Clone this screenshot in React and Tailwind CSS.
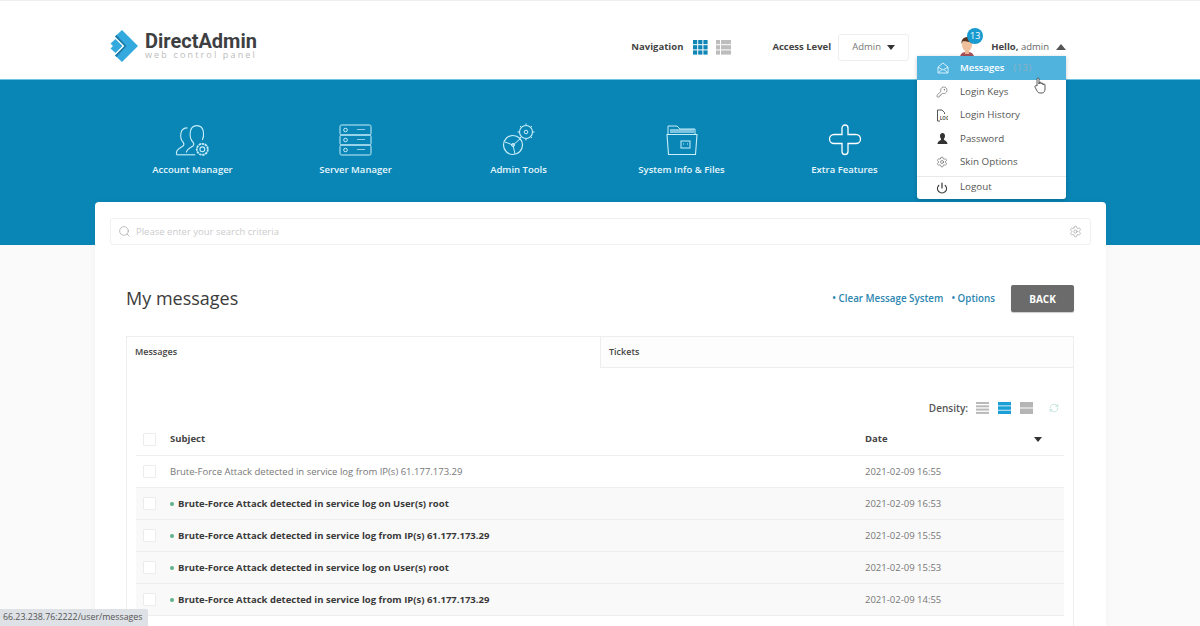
import React from "react";
import { KeyRound, Search, Settings, Power, RefreshCw } from "lucide-react";

const font = { fontFamily: '"Open Sans", sans-serif' };

const Logo = () => (
  <div className="flex items-center gap-[6px] pt-[12px]">
    <svg width="29" height="33" viewBox="0 0 29 33">
      <path d="M12 0 L28 16 L12 32 L5 25.500 L14.500 16 L5 6.500 Z" fill="#34a9de" />
      <path d="M0.500 13.500 L5.500 9 L12.500 16 L5.500 23 L0.500 18.500 L3 16 Z" fill="#34a9de" />
      <path d="M5 6.500 L14.500 16 L5 25.500 L6.500 27 L16.500 16 L6.500 5 Z" fill="#1f7ba6" />
    </svg>
    <div className="flex flex-col">
      <span className="text-[20px] leading-[18px] font-bold text-[#3d3f42] whitespace-nowrap" style={{ fontFamily: "Roboto, sans-serif" }}>
        DirectAdmin
      </span>
      <span className="text-[9px] leading-[10px] text-[#bcbcbc] tracking-[2.150px] whitespace-nowrap">web control panel</span>
    </div>
  </div>
);

const NavGrid = () => (
  <svg width="15" height="15" viewBox="0 0 15 15" fill="#0f86b5">
    {[0, 5.2, 10.4].map((y) =>
      [0, 5.2, 10.4].map((x) => <rect key={`${x}-${y}`} x={x} y={y} width="4.2" height="4.2" />)
    )}
  </svg>
);

const NavList = () => (
  <svg width="15" height="15" viewBox="0 0 15 15" fill="#bdbdbd">
    {[0, 5.2, 10.4].map((y) => (
      <g key={y}>
        <rect x="0" y={y} width="4" height="4.2" />
        <rect x="5" y={y} width="10" height="4.2" />
      </g>
    ))}
  </svg>
);

const Avatar = () => (
  <svg width="18" height="22" viewBox="0 0 18 22">
    <path d="M2 22 C2 17 5 16 9 16 C13 16 16 17 16 22 Z" fill="#a7505a" />
    <rect x="7" y="14" width="4" height="4" fill="#e9b48f" />
    <ellipse cx="9" cy="9" rx="5" ry="6.5" fill="#f0c09c" />
    <path d="M3.5 8 C3 2 7 1 10 1 C14 1 15 4 14.5 8 C13 5 7 6 5 5 Z" fill="#5b3423" />
  </svg>
);

const AccountIcon = () => (
  <svg width="44" height="33" viewBox="0 0 32 30" fill="none" stroke="#c8eefa" strokeWidth="1">
    <path d="M1 28 v-2 c0-3 3-4 6-6 c1-1 1-2 0-3.500 c-2-2-2.500-5-2-8 c.5-3 3-5 6-5" />
    <path d="M1 28 h17" />
    <path d="M10 26 c0-3 3-4 6-6 c1-1 1-2 0-3.500 c-2-2-3-5-2.500-9 c.5-4 3-6 6-6 s5.500 2 6 6 c.3 2.500 0 5-1 7" />
    <circle cx="24.500" cy="23" r="2.200" />
    <circle cx="24.500" cy="23" r="5" strokeDasharray="2.200 0.600" strokeWidth="1.600" />
  </svg>
);

const ServerIcon = () => (
  <svg width="34" height="32" viewBox="0 0 34 32" fill="none" stroke="#c8eefa" strokeWidth="1">
    {[1, 11, 21].map((y) => (
      <g key={y}>
        <rect x="1" y={y} width="31" height="10" rx="1.500" />
        <circle cx="6.500" cy={y + 5} r="1.800" />
        <path d={`M18 ${y + 5} l1 -1 l1 1 l1 -1 l1 1 l1 -1 l1 1 l1 -1 l1 1`} strokeWidth="0.700" />
      </g>
    ))}
  </svg>
);

const ToolsIcon = () => (
  <svg width="34" height="34" viewBox="0 0 34 34" fill="none" stroke="#c8eefa" strokeWidth="1">
    <circle cx="24" cy="9" r="6.500" strokeWidth="1.100" />
    <circle cx="24" cy="9" r="1.800" />
    <path d="M24 0.500v2M24 15.500v2M15.500 9h2M30.500 9h2M18 3l1.400 1.400M30 15l-1.400-1.400M18 15l1.400-1.400M30 3l-1.400 1.400" />
    <circle cx="11" cy="22" r="9.500" strokeWidth="1.200" />
    <path d="M11 22 l-8 -3 M11 22 l7 -6 M11 22 l2 9" />
    <circle cx="11" cy="22" r="1.500" />
  </svg>
);

const FolderIcon = () => (
  <svg width="32" height="32" viewBox="0 0 32 32" fill="none" stroke="#c8eefa" strokeWidth="1">
    <path d="M2 10 V2 h9 l3 3 h15 v5" />
    <path d="M4 6 h24 M4 8 h24" strokeWidth="1.500" opacity="0.800" />
    <path d="M1 10.500 h30 l-1.500 20 h-27 Z" strokeWidth="1.100" />
    <rect x="15" y="17" width="9" height="7" />
    <path d="M17 20 h1 M21 20 h1" />
  </svg>
);

const PlusIcon = () => (
  <svg width="34" height="32" viewBox="0 0 34 32" fill="none" stroke="#ffffff" strokeWidth="1.300">
    <path d="M14 4 a3 3 0 0 1 6 0 V10.500 H28 a4.500 4.500 0 0 1 0 9 H20 V27.500 a3 3 0 0 1 -6 0 V19.500 H6 a4.500 4.500 0 0 1 0 -9 H14 Z" />
  </svg>
);

const MailOpenIcon = ({ color }) => (
  <svg width="12" height="12" viewBox="0 0 12 12" fill="none" stroke={color} strokeWidth="1">
    <path d="M1 5 L6 1 L11 5 V11 H1 Z" />
    <path d="M1 5 L6 8 L11 5 M1 11 L5 7.500 M11 11 L7 7.500" />
  </svg>
);

const LogIcon = () => (
  <svg width="12" height="13" viewBox="0 0 12 13" fill="none" stroke="#555" strokeWidth="1">
    <path d="M4 12 H1.500 V1 H6 L8.500 3.500 V5" />
    <text x="3.800" y="10.500" fontSize="4.500" fontWeight="700" fill="#555" stroke="none">LOG</text>
  </svg>
);

const PersonIcon = () => (
  <svg width="11" height="11" viewBox="0 0 11 11" fill="#333">
    <path d="M5.500 0 C7.300 0 8 1.400 8 3 C8 4.600 7 5.600 6.800 6.400 C7.200 7.400 10.500 7.800 10.500 11 H0.500 C0.500 7.800 3.800 7.400 4.200 6.400 C4 5.600 3 4.600 3 3 C3 1.400 3.700 0 5.500 0 Z" />
  </svg>
);

const DensityIcon = ({ rows, color }) => (
  <svg width="13" height="12" viewBox="0 0 13 12" fill={color}>
    {rows.map(([y, h]) => (
      <rect key={y} x="0" y={y} width="13" height={h} />
    ))}
  </svg>
);

const Checkbox = () => <span className="block w-[13px] h-[13px] border border-[#ececec] bg-white rounded-[1px]" />;

const navItems = [
  { label: "Account Manager", icon: <AccountIcon /> },
  { label: "Server Manager", icon: <ServerIcon /> },
  { label: "Admin Tools", icon: <ToolsIcon /> },
  { label: "System Info & Files", icon: <FolderIcon /> },
  { label: "Extra Features", icon: <PlusIcon /> },
];

const menuItems = [
  { label: "Login Keys", icon: <KeyRound size={12} strokeWidth={1.2} color="#555" /> },
  { label: "Login History", icon: <LogIcon /> },
  { label: "Password", icon: <PersonIcon /> },
  { label: "Skin Options", icon: <Settings size={12} strokeWidth={1.2} color="#555" /> },
];

const messages = [
  { subject: "Brute-Force Attack detected in service log from IP(s) 61.177.173.29", date: "2021-02-09 16:55", unread: false },
  { subject: "Brute-Force Attack detected in service log on User(s) root", date: "2021-02-09 16:53", unread: true },
  { subject: "Brute-Force Attack detected in service log from IP(s) 61.177.173.29", date: "2021-02-09 15:55", unread: true },
  { subject: "Brute-Force Attack detected in service log on User(s) root", date: "2021-02-09 15:53", unread: true },
  { subject: "Brute-Force Attack detected in service log from IP(s) 61.177.173.29", date: "2021-02-09 14:55", unread: true },
];

const MessageRow = ({ msg }) => (
  <div className={`flex items-center h-[32px] border-b border-[#eeeeee] ${msg.unread ? "bg-[#f9f9f9]" : "bg-white"}`}>
    <div className="w-[34px] pl-[7px]">
      <Checkbox />
    </div>
    <div className="flex-1 flex items-center text-[9.500px] pt-[1px]">
      {msg.unread ? (
        <>
          <span className="w-[4px] h-[4px] rounded-full bg-[#5cb08a] mr-[4px]" />
          <span className="font-bold text-[#3a3a3a]">{msg.subject}</span>
        </>
      ) : (
        <span className="text-[#777]">{msg.subject}</span>
      )}
    </div>
    <div className="w-[199px] text-[9.500px] text-[#777] pt-[1px]">{msg.date}</div>
  </div>
);

export default function App() {
  return (
    <div className="relative w-[1200px] h-[626px] overflow-hidden bg-[#fafafa]" style={font}>
      <header className="h-[80px] bg-white border-t border-[#eeeeee] border-b border-b-[#6cc4e2] flex items-center pl-[110px] pr-[134px]">
        <Logo />
        <div className="flex-1" />
        <div className="flex items-center pt-[14px]">
          <span className="text-[9.500px] font-bold text-[#444]">Navigation</span>
          <div className="flex items-center gap-[8px] ml-[10px]">
            <NavGrid />
            <NavList />
          </div>
          <span className="text-[9.500px] font-bold text-[#444] ml-[41px]">Access Level</span>
          <div className="flex items-center justify-between ml-[7px] w-[71px] h-[27px] px-[13px] border border-[#eeeeee] rounded-[3px] bg-white">
            <span className="text-[9.500px] text-[#777]">Admin</span>
            <span className="w-0 h-0 border-l-[4.500px] border-r-[4.500px] border-t-[5px] border-l-transparent border-r-transparent border-t-[#333]" />
          </div>
          <div className="relative ml-[49px] w-[18px] h-[22px]">
            <Avatar />
            <span className="absolute -top-[8px] left-[9px] w-[16px] h-[16px] rounded-full bg-[#1a9bcf] text-white text-[9px] flex items-center justify-center">13</span>
          </div>
          <span className="text-[9.500px] text-[#666] ml-[15px]">
            <b className="text-[#444]">Hello,</b> admin
          </span>
          <span className="ml-[7px] w-0 h-0 border-l-[5.500px] border-r-[5.500px] border-b-[6px] border-l-transparent border-r-transparent border-b-[#555]" />
        </div>
      </header>

      <section className="h-[165px] bg-[#0a86b6] pl-[111px] pt-[42px]">
        <div className="grid grid-cols-[repeat(5,163px)]">
          {navItems.map((item) => (
            <div key={item.label} className="flex flex-col items-center">
              <div className="h-[36px] flex items-center justify-center">{item.icon}</div>
              <span className="mt-[4px] text-[9.500px] font-semibold text-[#e6f7fd] leading-[16px]">{item.label}</span>
            </div>
          ))}
        </div>
      </section>

      <main className="absolute left-[95px] top-[202px] w-[1011px] h-[430px] bg-white rounded-t-[4px] shadow-[0_0_8px_rgba(0,0,0,0.04)] px-[15px] pt-[16px]">
        <div className="h-[27px] flex items-center border border-[#f0f0f0] rounded-[3px] px-[7px] bg-white">
          <Search size={13} strokeWidth={1} color="#888" />
          <span className="ml-[5px] flex-1 text-[9.500px] text-[#cccccc] pt-[1px]">Please enter your search criteria</span>
          <Settings size={13} strokeWidth={1} color="#888" className="mr-[1px]" />
        </div>

        <div className="mt-[40px] ml-[16px] mr-[17px] flex items-center h-[27px]">
          <h1 className="text-[18px] text-[#3b3b3b] leading-[27px] font-normal">My messages</h1>
          <div className="flex-1" />
          <span className="text-[9.800px] font-semibold text-[#2c86b0] pt-[2px]">• Clear Message System</span>
          <span className="ml-[8px] text-[9.800px] font-semibold text-[#2c86b0] pt-[2px]">• Options</span>
          <button className="ml-[16px] w-[63px] h-[27px] pt-[2px] bg-[#6b6b6b] rounded-[2px] text-white text-[10px] font-bold shadow-[0_1px_1px_rgba(0,0,0,0.2)]">
            BACK
          </button>
        </div>

        <div className="mt-[24px] ml-[16px] mr-[17px] h-[300px] border border-[#eeeeee] bg-white">
          <div className="flex h-[31px] text-[9px] font-semibold text-[#444]">
            <div className="w-[473px] pl-[8px] pb-[1px] flex items-center">Messages</div>
            <div className="flex-1 pl-[8px] flex items-center border-l border-b border-[#eeeeee] bg-[#fdfdfd]">Tickets</div>
          </div>

          <div className="px-[9px]">
            <div className="h-[56px] flex items-start justify-end pt-[32px] pr-[5px]">
              <div className="flex items-center h-[16px]">
                <span className="text-[10px] font-semibold text-[#555] mr-[8px]">Density:</span>
                <div className="flex items-center gap-[9px]">
                  <DensityIcon color="#b9b9b9" rows={[[0, 2], [3.300, 2], [6.600, 2], [9.900, 2]]} />
                  <DensityIcon color="#1b9fd6" rows={[[0, 3.500], [4.300, 3.500], [8.600, 3.400]]} />
                  <DensityIcon color="#b5b5b5" rows={[[0, 5.500], [6.500, 5.500]]} />
                </div>
                <RefreshCw size={10} strokeWidth={1} color="#7fc8b8" className="ml-[16px] mr-[0px]" />
              </div>
            </div>

            <div className="flex items-center h-[32px] border-b border-[#eeeeee]">
              <div className="w-[34px] pl-[7px]">
                <Checkbox />
              </div>
              <div className="flex-1 text-[9.500px] font-bold text-[#444]">Subject</div>
              <div className="w-[199px] flex items-center justify-between pr-[22px] text-[9.500px] font-bold text-[#444]">
                <span>Date</span>
                <span className="w-0 h-0 border-l-[4.500px] border-r-[4.500px] border-t-[5px] border-l-transparent border-r-transparent border-t-[#333]" />
              </div>
            </div>
            {messages.map((msg, i) => (
              <MessageRow key={i} msg={msg} />
            ))}
          </div>
        </div>
      </main>

      {/* user dropdown */}
      <div className="absolute left-[917px] top-[56px] w-[149px] h-[143px] bg-white rounded-b-[3px] shadow-[0_1px_4px_rgba(0,0,0,0.2)] flex flex-col">
        <div className="h-[24px] bg-[#4fb3de] flex items-center pl-[20px]">
          <MailOpenIcon color="#d5eefa" />
          <span className="ml-[11px] text-[9.500px] font-semibold text-white">Messages</span>
          <span className="ml-[9px] text-[9.500px] text-[#8fb0c0] tracking-[0.5px]">(13)</span>
        </div>
        {menuItems.map((m) => (
          <div key={m.label} className="h-[23.400px] pt-[1px] flex items-center pl-[19px]">
            <span className="w-[12px] flex justify-center">{m.icon}</span>
            <span className="ml-[12px] text-[9.800px] text-[#555]">{m.label}</span>
          </div>
        ))}
        <div className="mt-[2px] border-t border-[#e8e8e8] flex-1 flex items-center pl-[19px]">
          <Power size={12} strokeWidth={2.400} color="#333" />
          <span className="ml-[12px] text-[9.800px] text-[#555]">Logout</span>
        </div>
      </div>

      {/* hand cursor */}
      <svg className="absolute left-[1034px] top-[77px]" width="13" height="17" viewBox="0 0 13 17" fill="#ffffff" stroke="#333" strokeWidth="0.800">
        <path d="M3 9 V2 a1 1 0 0 1 2 0 V7 V6 a1 1 0 0 1 2 0 V7 a1 1 0 0 1 2 0 V8 a1 1 0 0 1 2 0 V12 c0 2-1 4-3 4 H6 c-2 0-2-1-3-2 L1 10 c-.5-1 1-2 2-1 Z" />
      </svg>

      {/* browser status bar */}
      <div className="absolute left-0 bottom-0 w-[148px] h-[17px] bg-[#dee1e6] flex items-center pl-[3px] text-[8.800px] text-[#555] rounded-tr-[2px] whitespace-nowrap">
        66.23.238.76:2222/user/messages
      </div>
    </div>
  );
}
